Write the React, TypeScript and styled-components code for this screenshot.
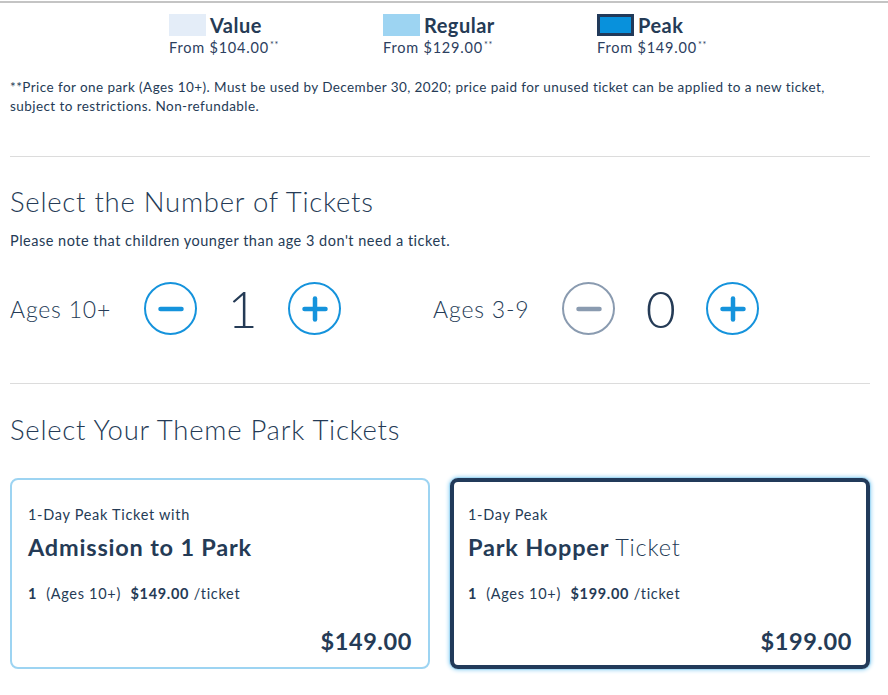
import React from "react";
import styled, { createGlobalStyle } from "styled-components";

const Global = createGlobalStyle`
  html, body { margin: 0; padding: 0; background: #fff; }
  body { font-family: Lato, "Noto Sans", "Liberation Sans", sans-serif; color: #253b56; }
  * { box-sizing: border-box; }
`;

const Page = styled.div`
  width: 888px;
  min-height: 695px;
  padding-top: 1px;
`;

const TopRule = styled.div`
  height: 2px;
  background: #c4c4c4;
`;

const Content = styled.div`
  width: 860px;
  margin-left: 10px;
`;

const Legend = styled.div`
  display: flex;
  justify-content: center;
  gap: 100px;
  margin-top: 10px;
`;

const LegendItem = styled.div`
  display: flex;
  flex-direction: column;
  width: 114px;
`;

const LegendTop = styled.div`
  display: flex;
  align-items: center;
  gap: 4px;
  height: 23px;
`;

const Swatch = styled.div<{ $fill: string; $border?: string }>`
  width: 37px;
  height: 22px;
  flex: none;
  background: ${(p) => p.$fill};
  border: ${(p) => (p.$border ? `3px solid ${p.$border}` : "none")};
`;

const LegendLabel = styled.span`
  font-size: 20px;
  font-weight: 700;
  line-height: 22px;
  letter-spacing: 0.5px;
`;

const LegendPrice = styled.div`
  font-size: 14.5px;
  line-height: 18px;
  letter-spacing: 0.8px;
  white-space: nowrap;
  color: #2c4060;
  sup {
    font-size: 9px;
    vertical-align: 5px;
    margin-left: 1px;
  }
`;

const Footnote = styled.p`
  margin: 21px 0 0;
  font-size: 13.5px;
  line-height: 19px;
  letter-spacing: 0.43px;
  color: #253b56;
`;

const Divider = styled.hr<{ $top: number }>`
  margin: ${(p) => p.$top}px 0 0;
  border: none;
  height: 1px;
  background: #dcdcdc;
`;

const Heading = styled.h2<{ $top: number }>`
  margin: ${(p) => p.$top}px 0 0;
  font-size: 27.5px;
  font-weight: 300;
  line-height: 34px;
  letter-spacing: 0.75px;
  color: #253b56;
`;

const Note = styled.p`
  margin: 12px 0 0;
  font-size: 14.5px;
  line-height: 20px;
  letter-spacing: 0.5px;
`;

const Steppers = styled.div`
  display: flex;
  align-items: center;
  gap: 92px;
  margin-top: 31px;
`;

const Stepper = styled.div`
  display: flex;
  align-items: center;
`;

const AgeLabel = styled.span`
  font-size: 23px;
  font-weight: 300;
  letter-spacing: 0.8px;
  margin-right: 33px;
  white-space: nowrap;
`;

const Count = styled.span`
  width: 91px;
  text-align: center;
  font-size: 52px;
  font-weight: 300;
  line-height: 53px;
`;

const CircleButton = styled.button<{ $disabled?: boolean }>`
  width: 53px;
  height: 53px;
  padding: 0;
  border-radius: 50%;
  border: 2.5px solid ${(p) => (p.$disabled ? "#8a9bb0" : "#1593dc")};
  background: #fff;
  display: flex;
  align-items: center;
  justify-content: center;
  cursor: pointer;
  svg { display: block; }
`;

const Cards = styled.div`
  display: grid;
  grid-template-columns: 420px 420px;
  gap: 20px;
  margin-top: 31px;
`;

const Card = styled.div<{ $selected?: boolean }>`
  height: 191px;
  border-radius: 8px;
  border: ${(p) => (p.$selected ? "4px solid #213a5a" : "2px solid #9dd4f2")};
  padding: ${(p) => (p.$selected ? "23px 14px 0" : "25px 16px 0")};
  box-shadow: ${(p) => (p.$selected ? "0 0 0 1px #a6daf5, 0 0 4px 1px #8fd0f3" : "none")};
  display: flex;
  flex-direction: column;
`;

const CardSub = styled.div`
  font-size: 14.5px;
  line-height: 20px;
  letter-spacing: 0.7px;
`;

const CardTitle = styled.div`
  margin-top: 8px;
  font-size: 23.5px;
  line-height: 28px;
  font-weight: 700;
  letter-spacing: 0.8px;
  span { font-weight: 300; }
`;

const CardDetail = styled.div`
  margin-top: 23px;
  font-size: 14.5px;
  line-height: 20px;
  letter-spacing: 0.7px;
  b { font-weight: 700; }
  .gap { margin: 0 5px 0 9px; }
`;

const CardTotal = styled.div`
  margin-top: 23px;
  text-align: right;
  font-size: 23.5px;
  line-height: 28px;
  font-weight: 700;
  letter-spacing: 0.6px;
`;

const Minus = ({ color }: { color: string }) => (
  <svg width="26" height="6" viewBox="0 0 26 6">
    <line x1="2.5" y1="3" x2="23.5" y2="3" stroke={color} strokeWidth="4.5" strokeLinecap="round" />
  </svg>
);

const Plus = ({ color }: { color: string }) => (
  <svg width="26" height="26" viewBox="0 0 26 26">
    <line x1="2.5" y1="13" x2="23.5" y2="13" stroke={color} strokeWidth="4.5" strokeLinecap="round" />
    <line x1="13" y1="2.5" x2="13" y2="23.5" stroke={color} strokeWidth="4.5" strokeLinecap="round" />
  </svg>
);

const legend = [
  { label: "Value", price: "$104.00", fill: "#e4edf8" },
  { label: "Regular", price: "$129.00", fill: "#9dd4f2" },
  { label: "Peak", price: "$149.00", fill: "#0891dc", border: "#213a5a" },
];

export default function App() {
  return (
    <Page>
      <Global />
      <TopRule />
      <Content>
        <Legend>
          {legend.map((l) => (
            <LegendItem key={l.label}>
              <LegendTop>
                <Swatch $fill={l.fill} $border={l.border} />
                <LegendLabel>{l.label}</LegendLabel>
              </LegendTop>
              <LegendPrice>
                From {l.price}
                <sup>**</sup>
              </LegendPrice>
            </LegendItem>
          ))}
        </Legend>
        <Footnote>
          **Price for one park (Ages 10+). Must be used by December 30, 2020; price paid for unused ticket can be
          applied to a new ticket, subject to restrictions. Non-refundable.
        </Footnote>
        <Divider $top={40} />
        <Heading $top={28}>Select the Number of Tickets</Heading>
        <Note>Please note that children younger than age 3 don't need a ticket.</Note>
        <Steppers>
          <Stepper>
            <AgeLabel>Ages 10+</AgeLabel>
            <CircleButton aria-label="decrease">
              <Minus color="#1593dc" />
            </CircleButton>
            <Count>1</Count>
            <CircleButton aria-label="increase">
              <Plus color="#1593dc" />
            </CircleButton>
          </Stepper>
          <Stepper>
            <AgeLabel>Ages 3-9</AgeLabel>
            <CircleButton $disabled aria-label="decrease">
              <Minus color="#8a9bb0" />
            </CircleButton>
            <Count>0</Count>
            <CircleButton aria-label="increase">
              <Plus color="#1593dc" />
            </CircleButton>
          </Stepper>
        </Steppers>
        <Divider $top={48} />
        <Heading $top={29}>Select Your Theme Park Tickets</Heading>
        <Cards>
          <Card>
            <CardSub>1-Day Peak Ticket with</CardSub>
            <CardTitle>Admission to 1 Park</CardTitle>
            <CardDetail>
              <b>1</b>
              <span className="gap">(Ages 10+)</span> <b>$149.00</b> /ticket
            </CardDetail>
            <CardTotal>$149.00</CardTotal>
          </Card>
          <Card $selected>
            <CardSub>1-Day Peak</CardSub>
            <CardTitle>
              Park Hopper <span>Ticket</span>
            </CardTitle>
            <CardDetail>
              <b>1</b>
              <span className="gap">(Ages 10+)</span> <b>$199.00</b> /ticket
            </CardDetail>
            <CardTotal>$199.00</CardTotal>
          </Card>
        </Cards>
      </Content>
    </Page>
  );
}
